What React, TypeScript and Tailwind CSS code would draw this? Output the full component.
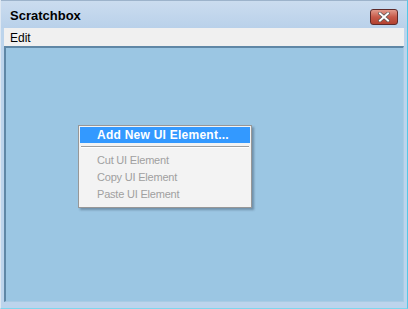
export default function App() {
  return (
    <div className="w-[408px] h-[309px] flex flex-col bg-[#bcd4ec] border-l border-l-[#dfe8f2] border-r border-r-[#52c8e8] border-b border-b-[#7fd6ee] font-['Liberation_Sans',sans-serif] overflow-hidden">
      {/* title bar */}
      <div className="h-[28px] shrink-0 flex items-center justify-between pl-[9px] pr-[9px] bg-gradient-to-b from-[#cbdcef] to-[#b9d1ea] border-t border-[#9db3cb]">
        <span className="text-[13px] font-bold text-black pt-[3px]">Scratchbox</span>
        <button className="w-[28px] h-[16px] mt-[5px] rounded-[3px] border border-[#5e2a2a] bg-gradient-to-b from-[#e19a8c] via-[#c75a4a] to-[#b2412f] flex items-center justify-center">
          <svg width="12" height="10" viewBox="0 0 12 10">
            <path d="M2 1.5 L10 8.5 M10 1.5 L2 8.5" stroke="#555" strokeWidth="3.4" strokeLinecap="square" />
            <path d="M2 1.5 L10 8.5 M10 1.5 L2 8.5" stroke="#fff" strokeWidth="2" strokeLinecap="square" />
          </svg>
        </button>
      </div>

      {/* window body */}
      <div className="flex-1 flex flex-col px-[3px] pb-[6px]">
        <div className="h-[18px] shrink-0 flex items-center bg-[#f0f0f0] px-[6px]">
          <span className="text-[12px] text-black pt-[1px]">Edit</span>
        </div>
        <div className="flex-1 bg-[#9bc6e3] border-t-2 border-l-2 border-[#5f87a6] border-r border-b border-r-[#a9cbe3] border-b-[#a9cbe3] pt-[77px] pl-[72px]">
          {/* context menu */}
          <div className="w-[174px] bg-[#f3f3f3] border border-[#979797] shadow-[2px_2px_2px_rgba(60,80,100,0.45)] p-[1px] flex flex-col">
            <div className="h-[16px] bg-[#3399ff] flex items-center pl-[17px]">
              <span className="text-[12px] font-bold text-white tracking-[0.25px]">Add New UI Element...</span>
            </div>
            <div className="mx-[1px] mt-[3px] mb-[4px] h-[2px] border-t border-[#a0a0a0] border-b border-b-white" />
            <div className="h-[17px] flex items-center pl-[17px] text-[11px] text-[#a0a0a0] tracking-[-0.2px]">Cut UI Element</div>
            <div className="h-[17px] flex items-center pl-[17px] text-[11px] text-[#a0a0a0] tracking-[-0.2px]">Copy UI Element</div>
            <div className="h-[17px] flex items-center pl-[17px] text-[11px] text-[#a0a0a0] tracking-[-0.2px]">Paste UI Element</div>
            <div className="h-[3px]" />
          </div>
        </div>
      </div>
    </div>
  );
}
